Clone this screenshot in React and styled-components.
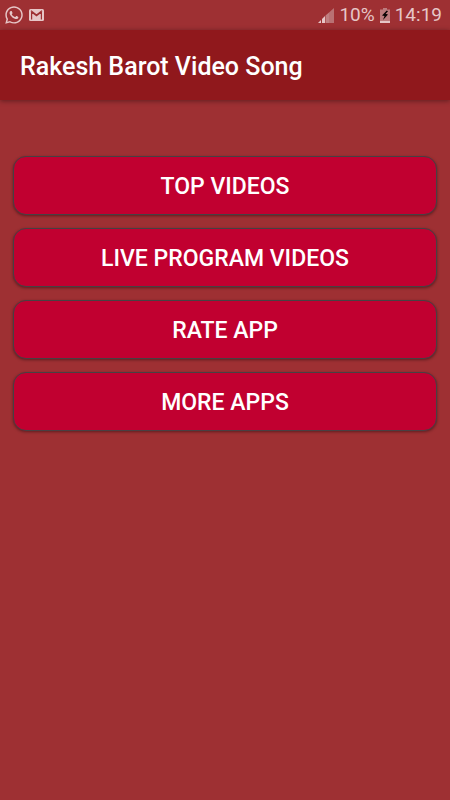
import React from 'react';
import styled, { createGlobalStyle } from 'styled-components';
import { FaWhatsapp } from 'react-icons/fa';

const GlobalStyle = createGlobalStyle`
    *{
        box-sizing: border-box;
    }

    body{
        margin: 0;
        background: #9e3033;
        font-family: Roboto, sans-serif;
    }
`;

const Screen = styled.div`
    min-height: 100vh;
    background: #9e3033;
`;

const StatusBar = styled.div`
    display: flex;
    align-items: center;
    justify-content: space-between;
    height: 30px;
    padding: 0 8px 0 4px;
    color: #e6c6c7;

    svg{
        display: block;
    }
`;

const StatusGroup = styled.div`
    display: flex;
    align-items: center;
    gap: 5px;
    font-size: 19px;
    line-height: 30px;
`;

const AppBar = styled.header`
    display: flex;
    align-items: center;
    height: 70px;
    padding: 4px 20px 0;
    background: #90181c;
    box-shadow: 0 1px 5px rgba(0, 0, 0, 0.4);

    h1{
        margin: 0;
        color: #ffffff;
        font-size: 25px;
        font-weight: 500;
        line-height: 32px;
    }
`;

const Menu = styled.main`
    display: flex;
    flex-direction: column;
    gap: 13px;
    padding: 56px 13px 24px;
`;

const MenuButton = styled.button`
    height: 59px;
    padding: 2px 16px 0;
    border: 1px solid #474043;
    border-radius: 13px;
    background: #c10030;
    box-shadow: 0 1px 3px rgba(0, 0, 0, 0.4);
    color: #ffffff;
    font-family: inherit;
    font-size: 23px;
    font-weight: 500;
    line-height: 28px;
    text-transform: uppercase;
    cursor: pointer;
`;

const items = ["Top Videos", "Live Program Videos", "Rate App", "More Apps"];

function MailIcon()
{
    return <svg width="15" height="12" viewBox="0 0 15 12" aria-hidden="true">
        <rect width="15" height="12" rx="1.5" fill="#e6c6c7" />
        <path d="M2.6 10.4V3L7.5 6.8L12.4 3V10.4M2 1.8L7.5 6L13 1.8" fill="none" stroke="#9e3033" strokeWidth="1.2" />
    </svg>
}

function SignalIcon()
{
    return <svg width="16" height="15" viewBox="0 0 16 15" aria-hidden="true">
        <path d="M0 15L3 12V15Z" fill="#e6c6c7" />
        <path d="M4 15V11L7 8V15Z" fill="#e6c6c7" />
        <path d="M7.5 15V7.5L11 4.5V15Z" fill="#c07f81" />
        <path d="M11 15V4.5L16 0V15Z" fill="#b97173" />
    </svg>
}

function BatteryIcon()
{
    return <svg width="10" height="15" viewBox="0 0 10 15" aria-hidden="true">
        <path d="M0 1.5H3V0H7V1.5H10V15H0Z" fill="#bd7b7d" />
        <path d="M0 13H10V15H0Z" fill="#e6c6c7" />
        <path d="M6.8 2.6L2 7.4L4.5 8L3 12L8 6.6L5.6 5.8L8 3.2Z" fill="#0c0505" />
    </svg>
}

export default () => {
    return <Screen>
        <GlobalStyle />
        <StatusBar>
            <StatusGroup>
                <FaWhatsapp size={20} aria-hidden="true" />
                <MailIcon />
            </StatusGroup>
            <StatusGroup>
                <SignalIcon />
                <span>10%</span>
                <BatteryIcon />
                <span>14:19</span>
            </StatusGroup>
        </StatusBar>
        <AppBar>
            <h1>Rakesh Barot Video Song</h1>
        </AppBar>
        <Menu>
            {items.map(item => <MenuButton key={item} type="button">{item}</MenuButton>)}
        </Menu>
    </Screen>
}
